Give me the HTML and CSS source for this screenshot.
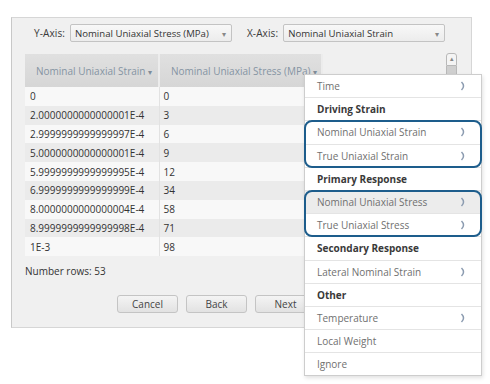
FILE: index.html
```html
<!DOCTYPE html>
<html lang="en">
<head>
    <meta charset="UTF-8">
    <title>Import data - column mapping</title>
    <link rel="stylesheet" href="styles.css">
</head>
<body>
    <div class="dialog">
        <div class="axes">
            <span class="axis-label">Y-Axis:</span>
            <div class="select select-y">
                <span>Nominal Uniaxial Stress (MPa)</span>
                <span class="caret">▾</span>
            </div>
            <span class="axis-label axis-x">X-Axis:</span>
            <div class="select select-x">
                <span>Nominal Uniaxial Strain</span>
                <span class="caret">▾</span>
            </div>
        </div>

        <div class="grid-wrap">
            <table class="grid">
                <colgroup>
                    <col class="col-a">
                    <col class="col-b">
                    <col>
                </colgroup>
                <thead>
                    <tr>
                        <th>Nominal Uniaxial Strain <span class="sort">▾</span></th>
                        <th>Nominal Uniaxial Stress (MPa) <span class="sort">▾</span></th>
                        <th class="filler"></th>
                    </tr>
                </thead>
                <tbody>
                    <tr><td>0</td><td>0</td><td></td></tr>
                    <tr><td>2.0000000000000001E-4</td><td>3</td><td></td></tr>
                    <tr><td>2.9999999999999997E-4</td><td>6</td><td></td></tr>
                    <tr><td>5.0000000000000001E-4</td><td>9</td><td></td></tr>
                    <tr><td>5.9999999999999995E-4</td><td>12</td><td></td></tr>
                    <tr><td>6.9999999999999999E-4</td><td>34</td><td></td></tr>
                    <tr><td>8.0000000000000004E-4</td><td>58</td><td></td></tr>
                    <tr><td>8.9999999999999998E-4</td><td>71</td><td></td></tr>
                    <tr><td>1E-3</td><td>98</td><td></td></tr>
                </tbody>
            </table>
            <div class="scrollbar">
                <div class="scroll-up">▴</div>
                <div class="thumb"></div>
            </div>
        </div>

        <p class="rowcount">Number rows: 53</p>

        <div class="buttons">
            <button class="btn">Cancel</button>
            <button class="btn">Back</button>
            <button class="btn">Next</button>
        </div>
    </div>

    <!-- column type menu, opened from the second header -->
    <ul class="menu">
        <li class="item">Time <svg class="chev" viewBox="0 0 6 10"><path d="M1.5 1 C4.2 3.6 4.2 6.4 1.5 9"/></svg></li>
        <li class="section">Driving Strain</li>
        <li class="group">
            <ul>
                <li class="item">Nominal Uniaxial Strain <svg class="chev" viewBox="0 0 6 10"><path d="M1.5 1 C4.2 3.6 4.2 6.4 1.5 9"/></svg></li>
                <li class="item">True Uniaxial Strain <svg class="chev" viewBox="0 0 6 10"><path d="M1.5 1 C4.2 3.6 4.2 6.4 1.5 9"/></svg></li>
            </ul>
        </li>
        <li class="section">Primary Response</li>
        <li class="group">
            <ul>
                <li class="item hover">Nominal Uniaxial Stress <svg class="chev" viewBox="0 0 6 10"><path d="M1.5 1 C4.2 3.6 4.2 6.4 1.5 9"/></svg></li>
                <li class="item">True Uniaxial Stress <svg class="chev" viewBox="0 0 6 10"><path d="M1.5 1 C4.2 3.6 4.2 6.4 1.5 9"/></svg></li>
            </ul>
        </li>
        <li class="section">Secondary Response</li>
        <li class="item">Lateral Nominal Strain <svg class="chev" viewBox="0 0 6 10"><path d="M1.5 1 C4.2 3.6 4.2 6.4 1.5 9"/></svg></li>
        <li class="section">Other</li>
        <li class="item">Temperature <svg class="chev" viewBox="0 0 6 10"><path d="M1.5 1 C4.2 3.6 4.2 6.4 1.5 9"/></svg></li>
        <li class="item">Local Weight</li>
        <li class="item last">Ignore</li>
    </ul>
</body>
</html>
```

FILE: styles.css
```css
body {
    margin: 0;
    position: relative;
    background: #ffffff;
    font-family: 'Open Sans', 'Noto Sans', sans-serif;
    font-size: 10px;
    color: #333;
    width: 490px;
    height: 384px;
    overflow: hidden;
}
.dialog {
    margin: 17px 0 0 11px;
    background: #f0f0f0;
    border: 1px solid #d6d6d6;
    border-left-color: #c8c8c8;
    padding: 6px 0 0 13px;
    box-sizing: content-box;
    width: 446px;
    height: 303px;
}
.axes {
    display: flex;
    align-items: center;
    padding-left: 9px;
    height: 18px;
}
.axis-label {
    color: #3a3a3a;
    margin-right: 5px;
    letter-spacing: 0.1px;
}
.axis-x {
    margin-left: 15px;
}
.select {
    height: 18px;
    box-sizing: border-box;
    border: 1px solid #c3c3c3;
    border-radius: 2px;
    background: linear-gradient(#f8f8f8, #ececec);
    display: flex;
    align-items: center;
    justify-content: space-between;
    padding: 0 5px 0 4px;
    font-size: 9.6px;
    color: #333;
}
.select-y {
    width: 162px;
}
.select-x {
    width: 162px;
}
.caret {
    color: #888;
    font-size: 8px;
}
.grid-wrap {
    display: flex;
    gap: 1px;
    margin-top: 12px;
}
.grid {
    width: 420px;
    border-collapse: collapse;
    table-layout: fixed;
}
.col-a {
    width: 134px;
}
.col-b {
    width: 163px;
}
.grid th {
    height: 33px;
    padding: 0 0 0 11px;
    text-align: left;
    font-weight: normal;
    color: #8594a3;
    white-space: nowrap;
    overflow: hidden;
    background: linear-gradient(#e0e0e0, #d6d6d6);
    border-right: 2px solid #ececec;
}
.grid th.filler {
    background: #f0f0f0;
    border-right: none;
}
.sort {
    font-size: 8px;
    color: #7f8c99;
}
.grid td {
    height: 18.8px;
    padding: 0 0 0 5px;
    white-space: nowrap;
    border-right: 1px solid #e2e2e2;
}
.grid td:nth-child(2) {
    padding-left: 4px;
}
.grid tbody tr:nth-child(odd) {
    background: #f8f8f8;
}
.grid tbody tr:nth-child(even) {
    background: #ebebeb;
}
.scrollbar {
    width: 11px;
    margin-top: -1px;
    display: flex;
    flex-direction: column;
}
.scroll-up {
    height: 13px;
    box-sizing: border-box;
    border: 1px solid #b8b8b8;
    border-radius: 3px 3px 0 0;
    background: #f4f4f4;
    color: #888;
    font-size: 7px;
    text-align: center;
    line-height: 10px;
}
.thumb {
    flex: 1;
    background: #cfcfcf;
    border: 1px solid #b8b8b8;
    border-top: none;
}
.rowcount {
    margin: 9px 0 0 0;
    line-height: 12px;
    color: #333;
}
.buttons {
    display: flex;
    gap: 8px;
    margin-top: 18px;
    padding-left: 92px;
}
.btn {
    width: 61px;
    height: 18px;
    border: 1px solid #c4c4c4;
    border-radius: 3px;
    background: linear-gradient(#f4f4f4, #e2e2e2);
    font-family: 'Open Sans', 'Noto Sans', sans-serif;
    font-size: 10px;
    color: #444;
    padding: 0;
}
.menu {
    position: absolute;
    left: 304px;
    top: 74px;
    width: 178px;
    margin: 0;
    padding: 0;
    list-style: none;
    background: #ffffff;
    border: 1px solid #cdcdcd;
    box-shadow: 1px 2px 4px rgba(0, 0, 0, 0.12);
    box-sizing: border-box;
}
.menu ul {
    margin: 0;
    padding: 0;
    list-style: none;
}
.item,
.section {
    height: 22.2px;
    border-bottom: 1px solid #e4e4e4;
    display: flex;
    align-items: center;
    justify-content: space-between;
    padding: 0 15px 0 12px;
}
.item {
    color: #707070;
}
.item.hover {
    background: #ececec;
}
.item.last {
    border-bottom: none;
}
.section {
    font-weight: bold;
    color: #3a3a3a;
}
.group {
    position: relative;
}
.group::after {
    content: "";
    position: absolute;
    left: -1px;
    right: -1px;
    top: -1px;
    bottom: 0;
    border: 2px solid #1d5d8c;
    border-radius: 8px;
}
.chev {
    width: 6px;
    height: 10px;
    fill: none;
    stroke: #8b9bb0;
    stroke-width: 1.5;
}
```
